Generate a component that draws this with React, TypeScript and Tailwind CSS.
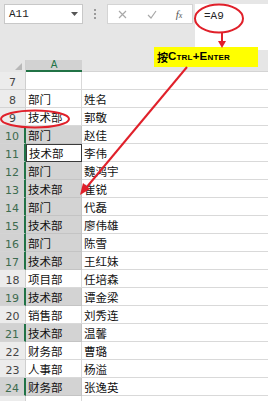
import React from "react";

type Row = { n: number | null; a: string; b: string; sel?: boolean; active?: boolean };

const rows: Row[] = [
  { n: 7, a: "", b: "" },
  { n: 8, a: "部门", b: "姓名" },
  { n: 9, a: "技术部", b: "郭敬" },
  { n: 10, a: "部门", b: "赵佳", sel: true },
  { n: 11, a: "技术部", b: "李伟", sel: true, active: true },
  { n: 12, a: "部门", b: "魏鸿宇", sel: true },
  { n: 13, a: "技术部", b: "崔锐", sel: true },
  { n: 14, a: "部门", b: "代磊", sel: true },
  { n: 15, a: "技术部", b: "廖伟雄", sel: true },
  { n: 16, a: "部门", b: "陈雪", sel: true },
  { n: 17, a: "技术部", b: "王红妹", sel: true },
  { n: 18, a: "项目部", b: "任培森" },
  { n: 19, a: "技术部", b: "谭金梁", sel: true },
  { n: 20, a: "销售部", b: "刘秀连" },
  { n: 21, a: "技术部", b: "温馨", sel: true },
  { n: 22, a: "财务部", b: "曹璐" },
  { n: 23, a: "人事部", b: "杨溢" },
  { n: 24, a: "财务部", b: "张逸英", sel: true },
  { n: null, a: "", b: "" },
];

const cjk = "font-['Noto_Sans_CJK_SC','Noto_Sans',sans-serif]";

export default function App() {
  return (
    <div className="relative w-[268px] h-[401px] overflow-hidden bg-white">
      {/* Formula bar area */}
      <div className="h-[60px] bg-[#e6e6e6] flex items-start pt-[4px] pl-[4px]">
        <div className="w-[79px] h-[20px] bg-white border border-[#c8c8c8] flex items-center justify-between pl-[4px] pr-[4px]">
          <span className="font-['Liberation_Mono',monospace] text-[11px] text-[#222] leading-none">A11</span>
          <svg width="7" height="4" viewBox="0 0 7 4">
            <path d="M0 0 L7 0 L3.5 4 Z" fill="#555" />
          </svg>
        </div>
        <div className="w-[24px] h-[20px] flex flex-col items-center justify-center gap-[2px]">
          <div className="w-[2px] h-[2px] bg-[#9a9a9a]" />
          <div className="w-[2px] h-[2px] bg-[#9a9a9a]" />
          <div className="w-[2px] h-[2px] bg-[#9a9a9a]" />
        </div>
        <div className="w-[86px] h-[20px] bg-white border border-[#d4d4d4] flex items-center">
          <div className="w-[29px] flex justify-center">
            <svg width="9" height="9" viewBox="0 0 9 9">
              <path d="M1 1 L8 8 M8 1 L1 8" stroke="#a8a8a8" strokeWidth="1.2" />
            </svg>
          </div>
          <div className="w-[29px] flex justify-center">
            <svg width="10" height="9" viewBox="0 0 10 9">
              <path d="M1 5 L4 8 L9 1" stroke="#a8a8a8" strokeWidth="1.2" fill="none" />
            </svg>
          </div>
          <div className="w-[26px] flex justify-center">
            <span className="font-['Liberation_Serif',serif] italic text-[11px] text-[#555] leading-none">
              f<span className="text-[8px]">x</span>
            </span>
          </div>
        </div>
        <div className="ml-[2px] flex-1 h-[46px] bg-white pl-[9px] pt-[5px] text-[11px] leading-none">
          <span className="font-['Liberation_Mono',monospace] text-[11px] text-[#222] leading-none">=A9</span>
        </div>
      </div>

      {/* Column header */}
      <div className="flex h-[12px] bg-[#e6e6e6]">
        <div className="w-[26px] h-full relative border-r border-[#cfcfcf]">
          <svg className="absolute right-[3px] bottom-[2px]" width="7" height="7" viewBox="0 0 7 7">
            <path d="M7 0 L7 7 L0 7 Z" fill="#b8b8b8" />
          </svg>
        </div>
        <div className="w-[56px] h-full bg-[#d2d2d2] border-b-2 border-[#217346] flex items-end justify-center">
          <span className="font-['Liberation_Sans',sans-serif] text-[10px] leading-none text-[#217346]">A</span>
        </div>
        <div className="flex-1 h-full border-b border-[#d4d4d4]" />
      </div>

      {/* Rows */}
      {rows.map((r, i) => (
        <div key={i} className="flex h-[18px]">
          <div
            className={
              "w-[26px] h-full flex items-end justify-center pb-[1px] border-b border-[#d4d4d4] " +
              (r.sel
                ? "bg-[#d2d2d2] border-r-2 border-r-[#217346] text-[#3d6b4f]"
                : "bg-[#ececec] border-r border-r-[#cfcfcf] text-[#444]")
            }
          >
            <span className="font-['DejaVu_Sans',sans-serif] text-[11px] leading-none">{r.n ?? ""}</span>
          </div>
          <div
            className={
              "w-[56px] h-full flex items-end pl-[2px] pb-[2px] " +
              (r.active
                ? "bg-white border border-[#3a3a3a]"
                : r.sel
                ? "bg-[#d3d3d3] border-b border-r border-[#c4c4c4]"
                : "bg-white border-b border-r border-[#d9d9d9]")
            }
          >
            <span className={cjk + " text-[11.5px] leading-none text-[#111]"}>{r.a}</span>
          </div>
          <div className="flex-1 h-full flex items-end pl-[2px] pb-[2px] border-b border-[#d9d9d9] bg-white">
            <span className={cjk + " text-[11.5px] leading-none text-[#111]"}>{r.b}</span>
          </div>
        </div>
      ))}

      {/* Annotation: yellow label */}
      <div className="absolute left-[154px] top-[47px] w-[104px] h-[20px] bg-[#ffff00] flex items-center pl-[3px]">
        <span className={cjk + " text-[11px] font-bold text-black leading-none"}>按</span>
        <span className="font-['Liberation_Sans',sans-serif] text-[11.5px] font-black text-black leading-none [font-variant:small-caps] tracking-[0.2px]">
          Ctrl+Enter
        </span>
      </div>

      {/* Annotation: red ellipses and arrows */}
      <svg className="absolute left-0 top-0 pointer-events-none" width="268" height="401" viewBox="0 0 268 401">
        <ellipse cx="219" cy="18.5" rx="24" ry="14" fill="none" stroke="#e0202a" strokeWidth="2" />
        <line x1="222" y1="33" x2="222" y2="42" stroke="#e0202a" strokeWidth="2" />
        <path d="M218 41 L226 41 L222 48 Z" fill="#e0202a" />
        <ellipse cx="35" cy="119" rx="34" ry="8.5" fill="none" stroke="#e0202a" strokeWidth="2" />
        <line x1="187" y1="67" x2="86" y2="188" stroke="#e0202a" strokeWidth="2" />
        <path d="M80 195 L83 183 L90 189 Z" fill="#e0202a" />
      </svg>
    </div>
  );
}
